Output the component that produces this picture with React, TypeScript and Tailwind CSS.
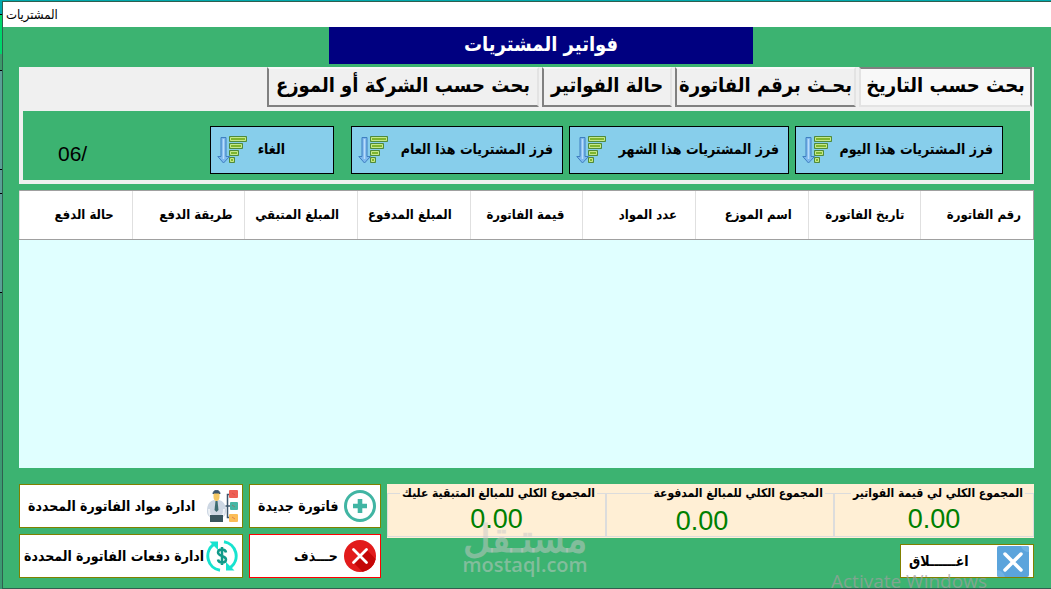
import type { ReactNode } from "react";
import clsx from "clsx";

const tabs = [
  { label: "بحث حسب التاريخ", width: "w-[173px]" },
  { label: "بحـث برقم الفاتورة", width: "w-[181px]" },
  { label: "حالة الفواتير", width: "w-[130px]" },
  { label: "بحث حسب الشركة أو الموزع", width: "w-[272px]" },
];

const filters = [
  { label: "فرز المشتريات هذا اليوم", box: "w-[208px] pr-[9px]" },
  { label: "فرز المشتريات هذا الشهر", box: "w-[220px] pr-[9px]" },
  { label: "فرز المشتريات هذا العام", box: "w-[212px] pr-[9px]" },
  { label: "الغاء", box: "w-[124px] pr-12 mr-[11px]" },
];

const columns = [
  { label: "رقم الفاتورة", pad: "pr-3" },
  { label: "تاريخ الفاتورة", pad: "pr-4" },
  { label: "اسم الموزع", pad: "pr-4" },
  { label: "عدد المواد", pad: "pr-[18px]" },
  { label: "قيمة الفاتورة", pad: "pr-[18px]" },
  { label: "المبلغ المدفوع", pad: "pr-[18px]" },
  { label: "المبلغ المتبقي", pad: "pr-[18px]" },
  { label: "طريقة الدفع", pad: "pr-3" },
  { label: "حالة الدفع", pad: "pr-[18px]" },
];

const totals = [
  { label: "المجموع الكلي لي قيمة الفواتير", value: "0.00", width: "grow-[200]", align: "" },
  { label: "المجموع الكلي للمبالغ المدفوعة", value: "0.00", width: "grow-[228]", align: "pr-9 pt-[2px]" },
  { label: "المجموع الكلي للمبالغ المتبقية عليك", value: "0.00", width: "grow-[219]", align: "" },
];

function SortIcon() {
  return (
    <svg width="32" height="30" viewBox="0 0 32 30" className="shrink-0">
      <path d="M4 2.5h5v19h3.5L6.5 28 .8 21.5H4z" fill="#7db8ee" stroke="#3f7fc0" />
      <path d="M6.5 4v20" stroke="#b9dcfa" strokeWidth="1.5" />
      <g fill="#7fb52e" stroke="#4f8a3c">
        <path d="M12.5 1.5h17v5h-17zM12.5 8.5h13v5h-13zM12.5 15.5h9v5h-9zM12.5 22.5h5v5h-5z" />
      </g>
      <g fill="none" stroke="#c5e88a">
        <path d="M13.5 2.5h15v3h-15zM13.5 9.5h11v3h-11zM13.5 16.5h7v3h-7zM13.5 23.5h3v3h-3z" />
      </g>
    </svg>
  );
}

function PlusIcon() {
  return (
    <svg width="32" height="32" viewBox="0 0 32 32" className="shrink-0">
      <circle cx="16" cy="16" r="14.5" fill="#fff" stroke="#41b5a3" strokeWidth="3" />
      <path d="M16 9v14M9 16h14" stroke="#41b5a3" strokeWidth="4.6" />
    </svg>
  );
}

function DeleteIcon() {
  return (
    <svg width="32" height="32" viewBox="0 0 32 32" className="shrink-0">
      <circle cx="16" cy="16" r="16" fill="#e21b1b" />
      <path d="M22.5 9.5 31.6 19A16 16 0 0 1 18.5 31.8L9.5 22.5z" fill="#c40606" />
      <path d="m9.5 9.5 13 13M22.5 9.5l-13 13" stroke="#fff" strokeWidth="2.8" strokeLinecap="round" />
    </svg>
  );
}

function ManagerIcon() {
  return (
    <svg width="32" height="32" viewBox="0 0 32 32" className="shrink-0">
      <path d="M1 21c0-7 3-10 7-11l2.5 1 2.5-1c4 1 7 4 7 11 0 4-2 6-4 6H5c-2 0-4-2-4-6z" fill="#cdd7e3" />
      <path d="M3 19c0 5 1 7 3 7M18 19c0 5-1 7-3 7" fill="none" stroke="#eef2f6" strokeWidth="2" />
      <path d="M7.5 2.5h6V7c0 2-1 4-3 4s-3-2-3-4z" fill="#f6c863" />
      <path d="M7 4c0-5 7-5 7 0l-1-1H8z" fill="#3d566b" stroke="#3d566b" />
      <path d="M9.5 11h2l1 9-2 2-2-2z" fill="#3d6b70" />
      <path d="M4 25h13v7H4z" fill="#39565f" />
      <path d="M24 4.5h-2.5v23H24M19.5 16H24" fill="none" stroke="#3d566b" strokeWidth="1.5" />
      <rect x="23" width="9" height="8" rx="1" fill="#ee6055" />
      <rect x="24" y="12" width="8" height="8" rx="1" fill="#45b7a4" />
      <rect x="23" y="24" width="9" height="8" rx="1" fill="#fbbd57" />
      <path d="m26 3 3 2M26 15l3 2M26 27l3 2" stroke="#c7443c" strokeOpacity=".5" />
    </svg>
  );
}

function PaymentsIcon() {
  return (
    <svg width="32" height="32" viewBox="0 0 32 32" className="shrink-0">
      <g fill="none" stroke="#17e3cf" strokeWidth="3">
        <path d="M14 30.3A14.5 14.5 0 0 1 7.5 4.5" />
        <path d="M18 1.7a14.5 14.5 0 0 1 6.5 25.8" />
      </g>
      <path d="M3.5 1.5H12V10zM28.5 30.5H20V22z" fill="#17e3cf" />
      <path
        d="M20 12.5c-.5-4-8-4-8 0s8 3 8 7-7.5 4-8 0M16 7v18"
        fill="none"
        stroke="#109a89"
        strokeWidth="2.5"
      />
    </svg>
  );
}

function CloseIcon() {
  return (
    <svg width="32" height="31" viewBox="0 0 32 31" className="shrink-0">
      <rect width="32" height="31" rx="2" fill="#5ba4dc" />
      <path d="M24 0h6a2 2 0 0 1 2 2v4c-3 0-7-2-8-6zM0 24c4 0 7 3 8 7H2a2 2 0 0 1-2-2z" fill="#6fb2e4" />
      <path d="m8 8 16 16M24 8 8 24" stroke="#fff" strokeWidth="3.5" strokeLinecap="round" />
    </svg>
  );
}

type ActionProps = { icon: ReactNode; children: ReactNode; className?: string };

function ActionButton({ icon, children, className }: ActionProps) {
  return (
    <button
      type="button"
      className={clsx(
        "flex items-center justify-between border bg-white pr-1 text-[14px] font-bold whitespace-nowrap",
        className,
      )}
    >
      {icon}
      <span>{children}</span>
    </button>
  );
}

export default function App() {
  return (
    <div
      dir="rtl"
      className="relative flex h-screen min-h-[480px] flex-col overflow-hidden border-t border-[#00a9ad] bg-[#3cb371] font-['DejaVu_Sans_Condensed','DejaVu_Sans',sans-serif] text-black"
    >
      <div className="flex flex-1 flex-row-reverse">
        {/* Sliver of the window behind */}
        <div className="flex w-[2px] flex-col bg-[#3c9a72]">
          <div className="h-[14px] border-b border-black bg-[#00a9ad]" />
          <div className="h-[39px] bg-[#00d76b]" />
          <div className="h-[17px] border-b border-black bg-[#3c9a6a]" />
          <div className="h-[99px] border-b border-black bg-[#5aa096]" />
          <div className="h-[24px] border-b border-black bg-[#5aa096]" />
          <div className="h-[99px] border-b border-black bg-[#5aa096]" />
        </div>

        <div className="flex min-w-0 flex-1 flex-col border-t border-b border-l border-[#2f5f4f]">
          <header className="flex h-[25px] items-center justify-end bg-white pl-[3px] text-[13px]">المشتريات</header>

          <main className="flex flex-1 flex-col pr-[17px] pb-[10px] pl-4">
            <h1 className="mr-[281px] ml-[310px] flex h-[37px] items-center justify-center bg-[#000080] pb-1 text-[20px] leading-8 font-bold text-white">
              فواتير المشتريات
            </h1>

            {/* Search tabs */}
            <section className="mt-[3px] bg-[#f0f0f0] pr-1 pb-1 pl-1">
              <div role="tablist" className="-mr-[2px] flex h-[40px] gap-[3px]">
                {tabs.map((tab, i) => (
                  <button
                    key={tab.label}
                    type="button"
                    role="tab"
                    aria-selected={i === 0}
                    className={clsx(
                      "flex shrink-0 items-center justify-center border-2 pb-1 text-[20px] leading-8 font-bold whitespace-nowrap",
                      tab.width,
                      i === 0
                        ? "border-t-[#808080] border-r-[#808080] border-b-[#e3e3e3] border-l-[#e3e3e3] bg-[#f8f8f8]"
                        : "border-t-[#f8f8f8] border-r-[#e3e3e3] border-b-[#808080] border-l-[#808080] bg-[#f0f0f0]",
                    )}
                  >
                    {tab.label}
                  </button>
                ))}
              </div>
              <div className="mt-1 flex h-[69px] items-center gap-[6px] bg-[#3cb371] pt-2 pr-[27px]">
                {filters.map((f) => (
                  <button
                    key={f.label}
                    type="button"
                    className={clsx(
                      "flex h-12 shrink-0 items-center justify-between border border-black bg-[#87ceeb] pl-[6px] text-[14px] font-bold whitespace-nowrap",
                      f.box,
                    )}
                  >
                    <span>{f.label}</span>
                    <SortIcon />
                  </button>
                ))}
                <span dir="ltr" className="mr-auto ml-[35px] pt-2 font-['Liberation_Sans',sans-serif] text-[21px]">
                  06/
                </span>
              </div>
            </section>

            {/* Invoices */}
            <div className="mt-[6px] flex-1 bg-[#e0ffff]">
              <table className="w-full table-fixed border-separate border-spacing-0 border-y border-r border-[#a0a0a0] bg-white">
                <thead>
                  <tr className="h-12">
                    {columns.map((c) => (
                      <th
                        key={c.label}
                        scope="col"
                        className={clsx(
                          "border-l border-[#e0e0e0] text-right text-[13px] font-bold whitespace-nowrap",
                          c.pad,
                        )}
                      >
                        {c.label}
                      </th>
                    ))}
                  </tr>
                </thead>
              </table>
            </div>

            {/* Totals and actions */}
            <footer className="mt-4 flex h-[94px] gap-[6px]">
              <div className="flex flex-1 flex-col justify-between">
                <div className="flex h-[54px] bg-[#ffefd5] pb-px">
                  {totals.map((total) => (
                    <fieldset
                      key={total.label}
                      className={clsx("min-w-0 basis-0 border border-[#dcdcdc]", total.width)}
                    >
                      <legend className="mr-2 px-[2px] text-[12px] leading-[18px] font-bold whitespace-nowrap">
                        {total.label}
                      </legend>
                      <output
                        className={clsx(
                          "block text-center font-['Liberation_Sans',sans-serif] text-[27px] leading-[34px] text-[#008000]",
                          total.align,
                        )}
                      >
                        {total.value}
                      </output>
                    </fieldset>
                  ))}
                </div>
                <ActionButton icon={<CloseIcon />} className="h-[34px] w-[134px] border-[#808000] pl-2">
                  اغــــــلاق
                </ActionButton>
              </div>
              <div className="grid grid-cols-[132px_224px] grid-rows-[44px_44px] gap-[6px]">
                <ActionButton icon={<PlusIcon />} className="border-[#808000] pl-2">
                  فاتورة جديدة
                </ActionButton>
                <ActionButton icon={<ManagerIcon />} className="border-[#808000] pl-2">
                  ادارة مواد الفاتورة المحددة
                </ActionButton>
                <ActionButton icon={<DeleteIcon />} className="border-[#ff0000] pl-11">
                  حـــذف
                </ActionButton>
                <ActionButton icon={<PaymentsIcon />} className="border-[#808000] pl-1">
                  ادارة دفعات الفاتورة المحددة
                </ActionButton>
              </div>
            </footer>
          </main>
        </div>
      </div>

      {/* Watermarks */}
      <div className="pointer-events-none absolute bottom-[14px] left-[461px] flex w-[128px] flex-col items-center text-[#c8c8c8]/50">
        <span className="font-['Liberation_Sans',serif] text-[38px] leading-[32px] font-bold">مستـقل</span>
        <span dir="ltr" className="font-['Open_Sans',sans-serif] text-[20px] leading-5 font-semibold">
          mostaql.com
        </span>
      </div>
      <div
        dir="ltr"
        className="pointer-events-none absolute -bottom-1 left-[831px] font-['Open_Sans',sans-serif] text-[19px] leading-6 whitespace-nowrap text-[#a0a0a0]/70"
      >
        Activate Windows
      </div>
    </div>
  );
}
